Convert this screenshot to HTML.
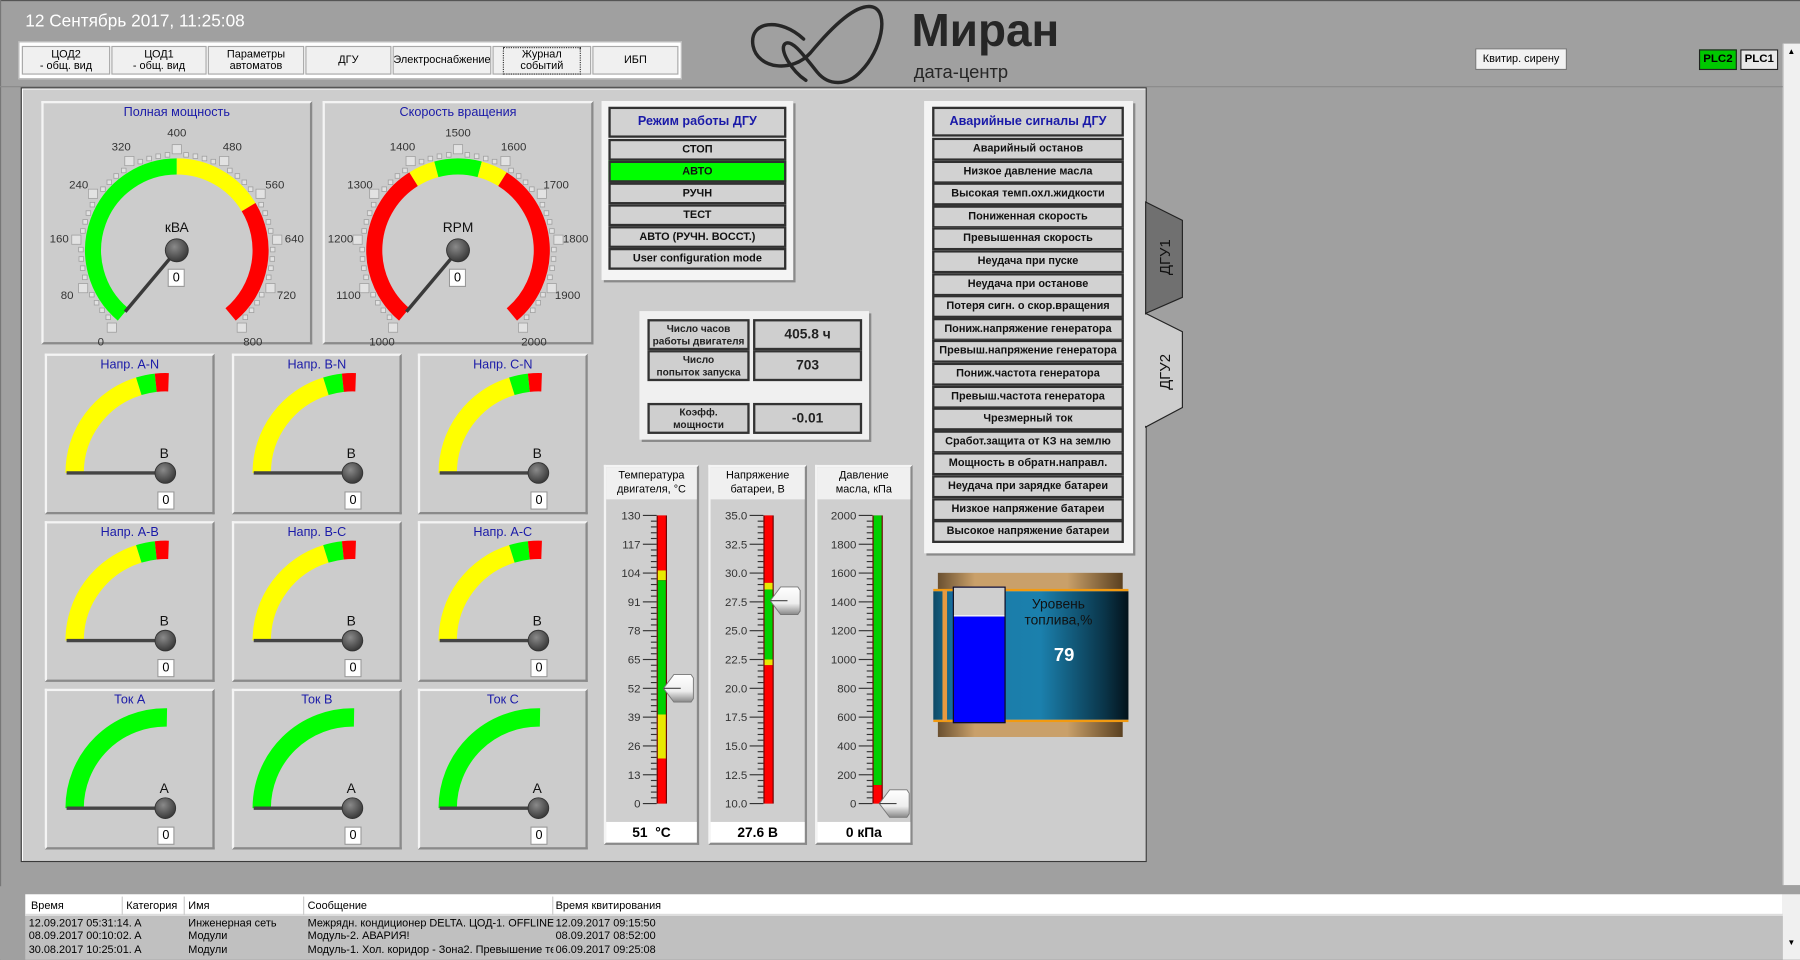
<!DOCTYPE html>
<html><head><meta charset="utf-8">
<style>
*{box-sizing:border-box}
html,body{margin:0;padding:0;width:1800px;height:960px;overflow:hidden;background:#a0a0a0;font-family:"Liberation Sans",sans-serif}
#w{position:absolute;left:0;top:0;width:1568px;height:836px;transform:scale(1.14796);transform-origin:0 0;background:#a0a0a0}
.a{position:absolute}
.btn{position:absolute;top:3px;height:25px;background:#f0f0f0;border:1px solid #a8a8a8;font-size:9.5px;line-height:10px;text-align:center;display:flex;align-items:center;justify-content:center;color:#000}
.pan{position:absolute;background:#cccccc;border:2px solid;border-color:#f4f4f4 #8a8a8a #8a8a8a #f4f4f4}
.ttl{position:absolute;left:0;right:0;top:2px;text-align:center;color:#1a1aa8;font-size:11px}
.row{position:absolute;left:0;right:0;height:19px;border:2px solid #303030;background:#d2d2d2;font-size:9.5px;font-weight:bold;text-align:center;line-height:15px;color:#111}
.val{position:absolute;background:#fff;border:1px solid #999;font-size:11px;text-align:center;line-height:14px;width:15px;height:16px}
.cell{position:absolute;border:2px solid #333;background:#cfcfcf;text-align:center;font-size:8.8px;font-weight:bold;color:#222;display:flex;align-items:center;justify-content:center;line-height:11px;white-space:nowrap;overflow:hidden}
.th{position:absolute;top:405px;height:331px;background:#cfcfcf;border:2px solid;border-color:#f4f4f4 #8a8a8a #8a8a8a #f4f4f4}
.thh{position:absolute;left:0;right:0;top:0;height:28px;background:#f0f0f0;font-size:9.5px;text-align:center;line-height:12px;padding-top:2px}
.thv{position:absolute;left:0;right:0;bottom:0;height:18px;background:#fff;font-size:12px;font-weight:bold;text-align:center;line-height:18px}
.lg{position:absolute;font-size:9.5px;color:#000;white-space:nowrap}
</style></head><body>
<div id="w">
<div class="a" style="left:0;top:0;width:1568px;height:1px;background:#555"></div>
<div class="a" style="left:22px;top:10px;color:#fff;font-size:15px">12 Сентябрь 2017, 11:25:08</div>

<div class="a" style="left:16px;top:36px;width:578px;height:33px;background:#fff;border:1px solid #bbb">
<div class="btn" style="left:2px;width:77px">ЦОД2<br>- общ. вид</div>
<div class="btn" style="left:80px;width:83px">ЦОД1<br>- общ. вид</div>
<div class="btn" style="left:164px;width:84px">Параметры<br>автоматов</div>
<div class="btn" style="left:249px;width:75px">ДГУ</div>
<div class="btn" style="left:325px;width:86px">Электроснабжение</div>
<div class="btn" style="left:412px;width:86px"><span style="border:1px dotted #333;padding:1px 14px">Журнал<br>событий</span></div>
<div class="btn" style="left:499px;width:75px">ИБП</div>
</div>

<svg class="a" style="left:645px;top:0" width="130" height="80" viewBox="645 0 130 80"><path d="M700,34 C680,15 652,18 656,40 C660,60 690,64 706,46 C726,22 746,3 760,6 C775,10 768,44 750,62 C738,75 722,75 712,63 C700,48 690,34 684,38 C678,43 690,62 702,70" stroke="#262626" stroke-width="3" fill="none" stroke-linecap="round"/></svg>
<div class="a" style="left:794px;top:5px;font-size:40px;font-weight:bold;color:#262626">Миран</div>
<div class="a" style="left:796px;top:55px;font-size:16px;color:#262626">дата-центр</div>

<div class="a" style="left:1285px;top:42px;width:80px;height:19px;background:#f2f2f2;border:1px solid #777;font-size:9.5px;text-align:center;line-height:17px">Квитир. сирену</div>
<div class="a" style="left:1480px;top:43px;width:33px;height:18px;background:#00c800;border:1px solid #222;font-size:10px;text-align:center;line-height:16px;font-weight:bold">PLC2</div>
<div class="a" style="left:1516px;top:43px;width:33px;height:18px;background:#e8e8e8;border:1px solid #222;font-size:10px;text-align:center;line-height:16px;font-weight:bold">PLC1</div>

<div class="a" style="left:1553px;top:38px;width:15px;height:733px;background:#f0f0f0;border-left:1px solid #ccc"></div>
<div class="a" style="left:1557px;top:42px;font-size:7px">▲</div>
<div class="a" style="left:0;top:0;width:1px;height:836px;background:#777"></div>
<div class="a" style="left:0;top:75px;width:1553px;height:1px;background:#8a8a8a"></div>

<div class="a" style="left:18px;top:76px;width:981px;height:675px;background:#cdcdcd;border:1px solid #3a3a3a;box-shadow:inset 1px 1px 0 #fff"></div>

<svg class="a" style="left:995px;top:170px" width="40" height="210" viewBox="995 170 40 210">
<polygon points="998,176 1030,192 1030,259 998,273" fill="#707070" stroke="#222" stroke-width="1"/>
<polygon points="998,273 1030,289 1030,355 998,372" fill="#cdcdcd" stroke="#222" stroke-width="1"/>
<line x1="998" y1="274" x2="998" y2="371" stroke="#cdcdcd" stroke-width="2"/>
<text transform="translate(1019,224) rotate(-90)" text-anchor="middle" font-size="13" font-family="Liberation Sans" fill="#111">ДГУ1</text>
<text transform="translate(1019,324) rotate(-90)" text-anchor="middle" font-size="13" font-family="Liberation Sans" fill="#111">ДГУ2</text>
</svg>

<div class="pan" style="left:36px;top:88px;width:236px;height:212px"><div class="ttl">Полная мощность</div></div>
<div class="pan" style="left:281px;top:88px;width:236px;height:212px"><div class="ttl">Скорость вращения</div></div>
<div id="small"></div>

<div class="a" style="left:524px;top:88px;width:167px;height:156px;background:#f4f4f4;box-shadow:2px 2px 0 #8a8a8a">
 <div class="row" style="left:6px;right:6px;top:5px;height:27px;line-height:23px;color:#1a1aa8;font-size:11px">Режим работы ДГУ</div>
 <div class="row" style="left:6px;right:6px;top:33px">СТОП</div>
 <div class="row" style="left:6px;right:6px;top:52px;background:#00ff00">АВТО</div>
 <div class="row" style="left:6px;right:6px;top:71px">РУЧН</div>
 <div class="row" style="left:6px;right:6px;top:90px">ТЕСТ</div>
 <div class="row" style="left:6px;right:6px;top:109px">АВТО (РУЧН. ВОССТ.)</div>
 <div class="row" style="left:6px;right:6px;top:128px">User configuration mode</div>
</div>

<div class="a" style="left:557px;top:271px;width:200px;height:112px;background:#f0f0f0;box-shadow:2px 2px 0 #8a8a8a">
 <div class="cell" style="left:7px;top:7px;width:89px;height:27px">Число часов<br>работы двигателя</div>
 <div class="cell" style="left:99px;top:7px;width:95px;height:27px;font-size:12px">405.8 ч</div>
 <div class="cell" style="left:7px;top:34px;width:89px;height:27px">Число<br>попыток запуска</div>
 <div class="cell" style="left:99px;top:34px;width:95px;height:27px;font-size:12px">703</div>
 <div class="cell" style="left:7px;top:80px;width:89px;height:27px">Коэфф.<br>мощности</div>
 <div class="cell" style="left:99px;top:80px;width:95px;height:27px;font-size:12px">-0.01</div>
</div>

<div class="th" style="left:526px;width:83px"><div class="thh">Температура<br>двигателя, °C</div><div class="thv">51 &nbsp;°C</div></div>
<div class="th" style="left:617px;width:86px"><div class="thh">Напряжение<br>батареи, В</div><div class="thv">27.6 В</div></div>
<div class="th" style="left:710px;width:85px"><div class="thh">Давление<br>масла, кПа</div><div class="thv">0 кПа</div></div>

<div class="a" style="left:805px;top:88px;width:182px;height:394px;background:#f4f4f4;box-shadow:2px 2px 0 #8a8a8a" id="al">
 <div class="row" style="left:7px;right:8px;top:5px;height:26px;line-height:22px;color:#1a1aa8;font-size:11px">Аварийные сигналы ДГУ</div>
</div>

<div class="a" style="left:817px;top:499px;width:161px;height:15px;background:linear-gradient(90deg,#6a5030,#c9a06a 20%,#c9a06a 70%,#5a4020)"></div>
<div class="a" style="left:817px;top:628px;width:161px;height:14px;background:linear-gradient(90deg,#6a5030,#c9a06a 20%,#c9a06a 70%,#5a4020)"></div>
<div class="a" style="left:813px;top:513px;width:170px;height:116px;background:linear-gradient(90deg,#0e4a66,#1b7aa6 12%,#1b80ad 55%,#0a3448 88%,#03121a);border-top:2px solid #f29a10;border-bottom:2px solid #f29a10"></div>
<div class="a" style="left:821px;top:514px;width:4px;height:114px;background:#e89a40"></div>
<div class="a" style="left:830px;top:511px;width:46px;height:119px;background:#0000ff;border:1px solid #111"><div style="height:25px;background:#cfcfcf;border-bottom:1px solid #fff"></div></div>
<div class="a" style="left:880px;top:519px;width:84px;text-align:center;font-size:12px;color:#111;line-height:14px">Уровень<br>топлива,%</div>
<div class="a" style="left:880px;top:563px;width:94px;text-align:center;font-size:16px;font-weight:bold;color:#fff">79</div>

<svg id="sv" class="a" style="left:0;top:0" width="1568" height="836"></svg>

<div class="a" style="left:0;top:772px;width:22px;height:64px;background:#a0a0a0"></div>
<div class="a" style="left:22px;top:779px;width:1531px;height:19px;background:#fff;border-bottom:2px solid #ddd"></div>
<div class="a" style="left:22px;top:798px;width:1531px;height:38px;background:#c0c0c0"></div>
<div class="a" style="left:1553px;top:779px;width:15px;height:57px;background:#f0f0f0"></div>
<div class="a" style="left:1557px;top:818px;font-size:7px">▼</div>
<div class="a" style="left:106px;top:781px;width:1px;height:16px;background:#ccc"></div>
<div class="a" style="left:160px;top:781px;width:1px;height:16px;background:#ccc"></div>
<div class="a" style="left:264px;top:781px;width:1px;height:16px;background:#ccc"></div>
<div class="a" style="left:481px;top:781px;width:1px;height:16px;background:#ccc"></div>
<div class="lg" style="left:27px;top:784px">Время</div>
<div class="lg" style="left:110px;top:784px">Категория</div>
<div class="lg" style="left:164px;top:784px">Имя</div>
<div class="lg" style="left:268px;top:784px">Сообщение</div>
<div class="lg" style="left:484px;top:784px">Время квитирования</div>
<div class="lg" style="left:25px;top:799px">12.09.2017 05:31:14. A</div>
<div class="lg" style="left:164px;top:799px">Инженерная сеть</div>
<div class="lg" style="left:268px;top:799px;width:214px;overflow:hidden">Межрядн. кондиционер DELTA. ЦОД-1. OFFLINE</div>
<div class="lg" style="left:484px;top:799px">12.09.2017 09:15:50</div>
<div class="lg" style="left:25px;top:810px">08.09.2017 00:10:02. A</div>
<div class="lg" style="left:164px;top:810px">Модули</div>
<div class="lg" style="left:268px;top:810px">Модуль-2. АВАРИЯ!</div>
<div class="lg" style="left:484px;top:810px">08.09.2017 08:52:00</div>
<div class="lg" style="left:25px;top:822px">30.08.2017 10:25:01. A</div>
<div class="lg" style="left:164px;top:822px">Модули</div>
<div class="lg" style="left:268px;top:822px;width:214px;overflow:hidden">Модуль-1. Хол. коридор - Зона2. Превышение температуры</div>
<div class="lg" style="left:484px;top:822px">06.09.2017 09:25:08</div>
</div>

<script>
var s='';
function pt(cx,cy,r,a){a=a*Math.PI/180;return [(cx+r*Math.sin(a)).toFixed(1),(cy-r*Math.cos(a)).toFixed(1)];}
function arc(cx,cy,r,a1,a2,c,w){var p=pt(cx,cy,r,a1),q=pt(cx,cy,r,a2);var L=(a2-a1)>180?1:0;
 return '<path d="M'+p+' A'+r+','+r+' 0 '+L+' 1 '+q+'" stroke="'+c+'" stroke-width="'+w+'" fill="none"/>';}
function knob(cx,cy,r){return '<circle cx="'+cx+'" cy="'+cy+'" r="'+r+'" fill="url(#kg)" stroke="#333" stroke-width="0.8"/>';}
s+='<defs><radialGradient id="kg" cx="40%" cy="35%" r="65%"><stop offset="0" stop-color="#8a8a8a"/><stop offset="1" stop-color="#3a3a3a"/></radialGradient><linearGradient id="pg" x1="0" y1="0" x2="0" y2="1"><stop offset="0" stop-color="#fff"/><stop offset="0.6" stop-color="#eee"/><stop offset="1" stop-color="#888"/></linearGradient></defs>';
function big(cx,cy,segs,labels){
 for(var i=0;i<=50;i++){var a=-140+i*5.6;var maj=i%5==0;var r=maj?88:83.5,z=maj?8:4;var p=pt(cx,cy,r,a);
  s+='<rect x="'+(p[0]-z/2)+'" y="'+(p[1]-z/2)+'" width="'+z+'" height="'+z+'" fill="#e2e2e2" stroke="#a0a0a0" stroke-width="0.7"/>';
  if(maj){var q=pt(cx,cy,103,a);s+='<text x="'+q[0]+'" y="'+(+q[1]+4)+'" text-anchor="middle" font-size="10" fill="#333" font-family="Liberation Sans">'+labels[i/5]+'</text>';}}
 segs.forEach(function(g){s+=arc(cx,cy,73,g[0],g[1],g[2],14);});
 var e=pt(cx,cy,70,-140);s+='<line x1="'+cx+'" y1="'+cy+'" x2="'+e[0]+'" y2="'+e[1]+'" stroke="#3a3a3a" stroke-width="3"/>';
 s+=knob(cx,cy,10);
}
big(154,218,[[-140,0,'#00ff00'],[0,59,'#ffff00'],[59,140,'#ff0000']],[0,80,160,240,320,400,480,560,640,720,800]);
big(399,218,[[-140,-32,'#ff0000'],[-32,-15,'#ffff00'],[-15,15,'#00ff00'],[15,32,'#ffff00'],[32,140,'#ff0000']],[1000,1100,1200,1300,1400,1500,1600,1700,1800,1900,2000]);
s+='<text x="154" y="202" text-anchor="middle" font-size="12" font-family="Liberation Sans" fill="#111">кВА</text>';
s+='<text x="399" y="202" text-anchor="middle" font-size="12" font-family="Liberation Sans" fill="#111">RPM</text>';
var h='';
h+='<div class="val" style="left:146px;top:234px">0</div><div class="val" style="left:391px;top:234px">0</div>';
var tt=[['Напр. A-N','Напр. B-N','Напр. C-N'],['Напр. A-B','Напр. B-C','Напр. A-C'],['Ток A','Ток B','Ток C']];
var Ls=[39,202,364],Ts=[308,454,600];
for(var r=0;r<3;r++)for(var c=0;c<3;c++){var L=Ls[c],T=Ts[r],cx=L+105,cy=T+104;
 h+='<div class="pan" style="left:'+L+'px;top:'+T+'px;width:148px;height:140px"><div class="ttl">'+tt[r][c]+'</div></div>';
 h+='<div class="val" style="left:'+(cx-7)+'px;top:'+(cy+16)+'px">0</div>';
 if(r<2){s+=arc(cx,cy,79,-90,-17,'#ffff00',16)+arc(cx,cy,79,-17,-6,'#00ff00',16)+arc(cx,cy,79,-6,2,'#ff0000',16);}
 else s+=arc(cx,cy,79,-90,1,'#00ff00',16);
 s+='<line x1="'+(cx-86)+'" y1="'+cy+'" x2="'+cx+'" y2="'+cy+'" stroke="#444" stroke-width="3"/>';
 s+=knob(cx,cy,9);
 s+='<text x="'+(cx-1)+'" y="'+(cy-13)+'" text-anchor="middle" font-size="12" font-family="Liberation Sans" fill="#111">'+(r<2?'B':'A')+'</text>';
}
document.getElementById('small').innerHTML=h;
function therm(tx,labs,segs,pv){var top=449,bot=700,H=bot-top;
 for(var i=0;i<=50;i++){var y=top+H*i/50;var maj=i%5==0;s+='<line x1="'+(tx-(maj?12:5))+'" y1="'+y.toFixed(1)+'" x2="'+tx+'" y2="'+y.toFixed(1)+'" stroke="#333" stroke-width="1"/>';
  if(maj)s+='<text x="'+(tx-14)+'" y="'+(y+3.5).toFixed(1)+'" text-anchor="end" font-size="10" fill="#333" font-family="Liberation Sans">'+labs[i/5]+'</text>';}
 s+='<rect x="'+(tx)+'" y="'+top+'" width="9" height="'+H+'" fill="#6b0000"/>';
 segs.forEach(function(g){s+='<rect x="'+(tx+1)+'" y="'+(top+H*g[0]).toFixed(1)+'" width="7" height="'+(H*(g[1]-g[0])).toFixed(1)+'" fill="'+g[2]+'"/>';});
 var py=top+H*pv,px=tx+6;
 s+='<polygon points="'+px+','+py+' '+(px+9)+','+(py-12)+' '+(px+24)+','+(py-12)+' '+(px+26)+','+(py-9)+' '+(px+26)+','+(py+9)+' '+(px+24)+','+(py+12)+' '+(px+9)+','+(py+12)+'" fill="url(#pg)" stroke="#777" stroke-width="0.8"/>';
 s+='<line x1="'+px+'" y1="'+py+'" x2="'+(px+15)+'" y2="'+py+'" stroke="#444"/>';
}
therm(572,[130,117,104,91,78,65,52,39,26,13,0],[[0,.191,'#ff0000'],[.191,.225,'#e8e800'],[.225,.691,'#00d000'],[.691,.844,'#e8e800'],[.844,1,'#ff0000']],0.6);
therm(665,['35.0','32.5','30.0','27.5','25.0','22.5','20.0','17.5','15.0','12.5','10.0'],[[0,.234,'#ff0000'],[.234,.257,'#e8e800'],[.257,.5,'#00d000'],[.5,.52,'#e8e800'],[.52,1,'#ff0000']],0.296);
therm(760,[2000,1800,1600,1400,1200,1000,800,600,400,200,0],[[0,.936,'#00d000'],[.936,1,'#ff0000']],1);
document.getElementById('sv').innerHTML=s;
var al=['Аварийный останов','Низкое давление масла','Высокая темп.охл.жидкости','Пониженная скорость','Превышенная скорость','Неудача при пуске','Неудача при останове','Потеря сигн. о скор.вращения','Пониж.напряжение генератора','Превыш.напряжение генератора','Пониж.частота генератора','Превыш.частота генератора','Чрезмерный ток','Сработ.защита от КЗ на землю','Мощность в обратн.направл.','Неудача при зарядке батареи','Низкое напряжение батареи','Высокое напряжение батареи'];
var a='';al.forEach(function(t,i){a+='<div class="row" style="left:7px;right:8px;top:'+(32+i*19.6).toFixed(1)+'px;height:20px">'+t+'</div>';});
document.getElementById('al').insertAdjacentHTML('beforeend',a);
</script>
</body></html>
